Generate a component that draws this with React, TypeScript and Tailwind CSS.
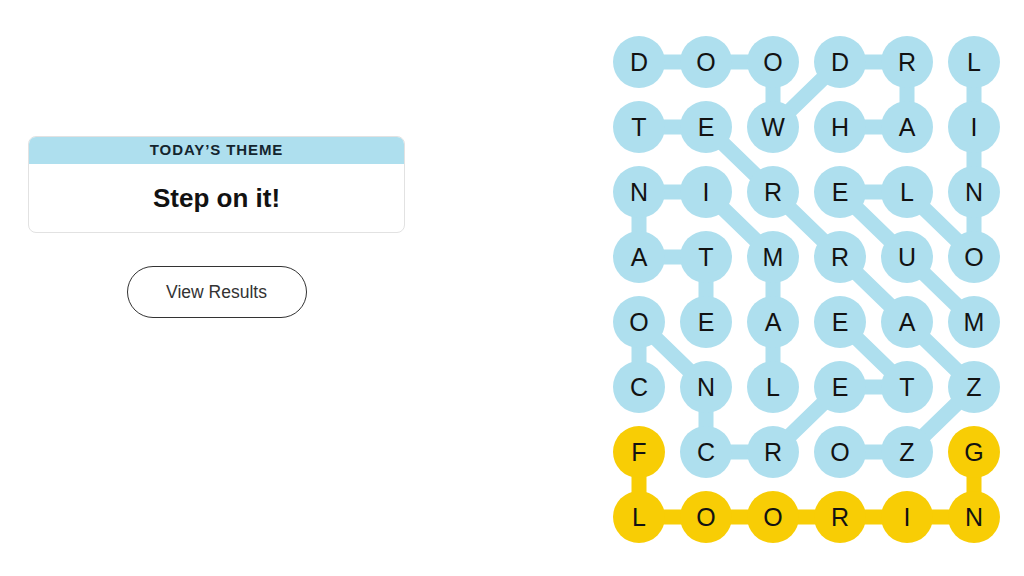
import React from "react";

const LETTERS = [
  "DOODRL",
  "TEWHAI",
  "NIRELN",
  "ATMRUO",
  "OEAEAM",
  "CNLETZ",
  "FCROZG",
  "LOORIN",
];

type P = [number, number];
const BLUE = "#aedfee";
const YELLOW = "#f8cd05";

const WORDS: { path: P[]; color: string }[] = [
  { path: [[1, 3], [1, 4], [0, 4], [0, 3], [1, 2], [0, 2], [0, 1], [0, 0]], color: BLUE },
  { path: [[1, 0], [1, 1], [2, 2], [3, 3], [4, 4], [5, 5], [6, 4], [6, 3]], color: BLUE },
  { path: [[0, 5], [1, 5], [2, 5], [3, 5], [2, 4], [2, 3], [3, 4], [4, 5]], color: BLUE },
  { path: [[5, 2], [4, 2], [3, 2], [2, 1], [2, 0], [3, 0], [3, 1], [4, 1]], color: BLUE },
  { path: [[5, 0], [4, 0], [5, 1], [6, 1], [6, 2], [5, 3], [5, 4], [4, 3]], color: BLUE },
  { path: [[6, 0], [7, 0], [7, 1], [7, 2], [7, 3], [7, 4], [7, 5], [6, 5]], color: YELLOW },
];

const COL = 67;
const ROW = 65;
const R = 26;

const cx = (c: number) => R + c * COL;
const cy = (r: number) => R + r * ROW;

function isYellow(r: number, c: number) {
  return WORDS[5].path.some(([a, b]) => a === r && b === c);
}

function Board() {
  return (
    <div className="relative w-[387px] h-[507px]">
      <svg className="absolute inset-0" width={387} height={507}>
        {WORDS.map((w, i) => (
          <polyline
            key={i}
            points={w.path.map(([r, c]) => `${cx(c)},${cy(r)}`).join(" ")}
            fill="none"
            stroke={w.color}
            strokeWidth={15}
            strokeLinejoin="round"
          />
        ))}
      </svg>
      <div className="relative grid grid-cols-[repeat(6,52px)] gap-x-[15px] gap-y-[13px]">
        {LETTERS.flatMap((row, r) =>
          row.split("").map((ch, c) => (
            <div
              key={`${r}-${c}`}
              className={`w-[52px] h-[52px] rounded-full flex items-center justify-center text-[25px] text-[#121212] leading-none ${
                isYellow(r, c) ? "bg-[#f8cd05]" : "bg-[#aedfee]"
              }`}
              style={{ fontFamily: '"Liberation Sans", Arial, sans-serif' }}
            >
              {ch}
            </div>
          ))
        )}
      </div>
    </div>
  );
}

export default function App() {
  return (
    <div
      className="w-[1024px] h-[576px] bg-white flex overflow-hidden"
      style={{ fontFamily: '"Liberation Sans", Arial, sans-serif' }}
    >
      <div className="pl-[28px] pt-[136px] flex flex-col items-center w-[405px]">
        <div className="w-[377px] h-[97px] rounded-[8px] border border-[#e2e2e2] overflow-hidden flex flex-col">
          <div className="h-[27px] bg-[#aedfee] flex items-center justify-center text-[15px] font-bold tracking-[0.06em] text-[#14252e]">
            TODAY’S THEME
          </div>
          <div className="flex-1 flex items-center justify-center text-[26px] font-bold text-[#121212]">
            Step on it!
          </div>
        </div>
        <button className="mt-[33px] w-[180px] h-[52px] rounded-full border border-[#333] text-[17.5px] text-[#333] bg-white">
          View Results
        </button>
      </div>
      <div className="ml-auto mr-[24px] mt-[36px]">
        <Board />
      </div>
    </div>
  );
}
